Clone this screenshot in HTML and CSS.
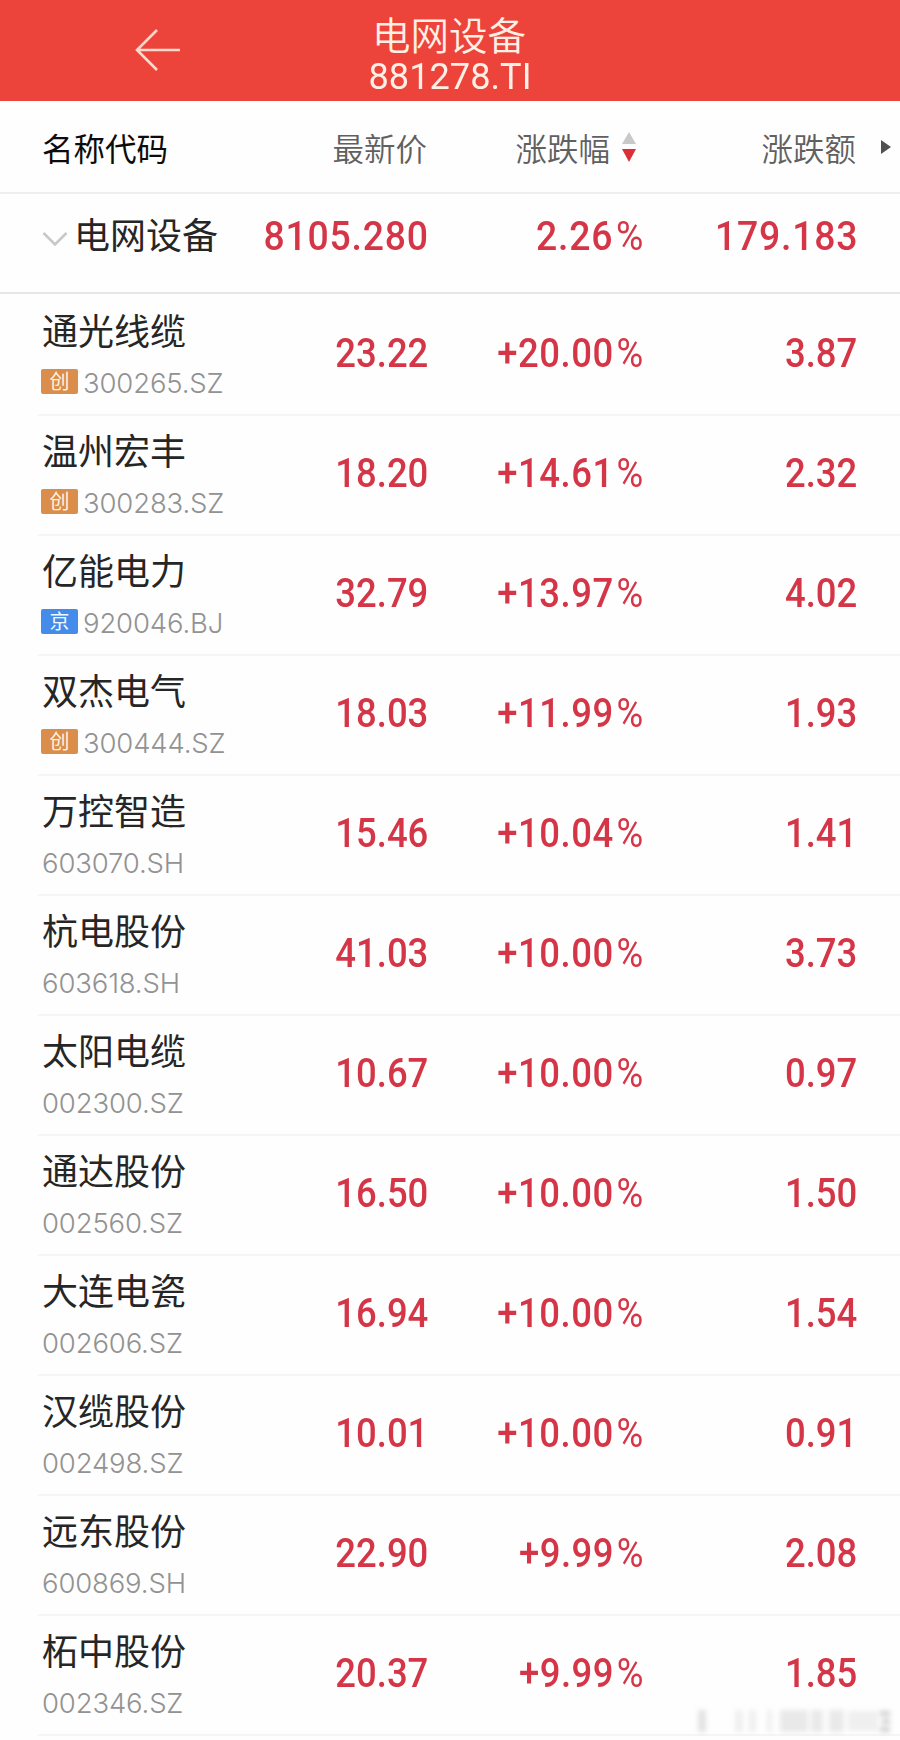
FILE: index.html
```html
<!DOCTYPE html>
<html lang="zh-CN">
<head>
<meta charset="utf-8">
<title>电网设备</title>
<link rel="stylesheet" href="styles.css">
</head>
<body>
<header class="topbar">
  <svg class="back" width="48" height="44" viewBox="0 0 48 44"><path d="M46 22H3M23 2 3 22l20 20" /></svg>
  <div class="title"><div class="title-name">电网设备</div><div class="title-code">881278.TI</div></div>
</header>
<div class="grid columns">
  <div class="col-name">名称代码</div>
  <div class="cell">最新价</div>
  <div class="cell sort">涨跌幅<svg width="16" height="32" viewBox="0 0 16 32"><path fill="#c9c9c9" d="M8 1 15 13H1z"/><path fill="#dc3038" d="M1 18h14L8 31z"/></svg></div>
  <div class="cell">涨跌额</div>
  <svg class="more" width="10" height="14" viewBox="0 0 10 14"><path fill="#505050" d="M0 0 10 7 0 14z"/></svg>
</div>
<div class="grid summary">
  <div class="sum-name"><svg width="26" height="16" viewBox="0 0 26 16"><path d="M1.5 2 13 13.500 24.500 2"/></svg>电网设备</div>
  <div class="num">8105.280</div><div class="num pct">2.26<i>%</i></div><div class="num">179.183</div>
</div>
<main class="list">
  <div class="grid row"><div class="stock"><div class="name">通光线缆</div><div class="code"><b class="tag">创</b>300265.SZ</div></div><div class="num">23.22</div><div class="num pct">+20.00<i>%</i></div><div class="num">3.87</div></div>
  <div class="grid row"><div class="stock"><div class="name">温州宏丰</div><div class="code"><b class="tag">创</b>300283.SZ</div></div><div class="num">18.20</div><div class="num pct">+14.61<i>%</i></div><div class="num">2.32</div></div>
  <div class="grid row"><div class="stock"><div class="name">亿能电力</div><div class="code"><b class="tag bj">京</b>920046.BJ</div></div><div class="num">32.79</div><div class="num pct">+13.97<i>%</i></div><div class="num">4.02</div></div>
  <div class="grid row"><div class="stock"><div class="name">双杰电气</div><div class="code"><b class="tag">创</b>300444.SZ</div></div><div class="num">18.03</div><div class="num pct">+11.99<i>%</i></div><div class="num">1.93</div></div>
  <div class="grid row"><div class="stock"><div class="name">万控智造</div><div class="code">603070.SH</div></div><div class="num">15.46</div><div class="num pct">+10.04<i>%</i></div><div class="num">1.41</div></div>
  <div class="grid row"><div class="stock"><div class="name">杭电股份</div><div class="code">603618.SH</div></div><div class="num">41.03</div><div class="num pct">+10.00<i>%</i></div><div class="num">3.73</div></div>
  <div class="grid row"><div class="stock"><div class="name">太阳电缆</div><div class="code">002300.SZ</div></div><div class="num">10.67</div><div class="num pct">+10.00<i>%</i></div><div class="num">0.97</div></div>
  <div class="grid row"><div class="stock"><div class="name">通达股份</div><div class="code">002560.SZ</div></div><div class="num">16.50</div><div class="num pct">+10.00<i>%</i></div><div class="num">1.50</div></div>
  <div class="grid row"><div class="stock"><div class="name">大连电瓷</div><div class="code">002606.SZ</div></div><div class="num">16.94</div><div class="num pct">+10.00<i>%</i></div><div class="num">1.54</div></div>
  <div class="grid row"><div class="stock"><div class="name">汉缆股份</div><div class="code">002498.SZ</div></div><div class="num">10.01</div><div class="num pct">+10.00<i>%</i></div><div class="num">0.91</div></div>
  <div class="grid row"><div class="stock"><div class="name">远东股份</div><div class="code">600869.SH</div></div><div class="num">22.90</div><div class="num pct">+9.99<i>%</i></div><div class="num">2.08</div></div>
  <div class="grid row"><div class="stock"><div class="name">柘中股份</div><div class="code">002346.SZ</div></div><div class="num">20.37</div><div class="num pct">+9.99<i>%</i></div><div class="num">1.85</div></div>
</main>
<svg class="smudge" width="204" height="32" viewBox="0 0 204 32"><g fill="#c4c4c4"><path opacity=".45" d="M6 5h8v22H6z"/><path opacity=".25" d="M43 5h8v22h-8zM57 5h7v22h-7zM75 5h5v22h-5z"/><path opacity=".36" d="M88 5h28v22H88zM119 5h12v22h-12zM137 5h15v22h-15z"/><path opacity=".25" d="M156 6h30v20h-30z"/><path opacity=".8" d="M188 6h10v5h-10zM190 14h8v5h-8zM188 22h10v5h-10z"/></g></svg>
</body>
</html>
```
FILE: styles.css
```css
* { box-sizing: border-box; }
body {
  margin: 0;
  width: 900px;
  height: 1740px;
  overflow: hidden;
  position: relative;
  background: #fefefe;
  font-family: "Noto Sans CJK SC", sans-serif;
}
.topbar {
  display: grid;
  grid-template-columns: 134px 1fr 134px;
  height: 101px;
  background: #ec443b;
  color: #ffefe4;
}
.back {
  margin-top: 28px;
  margin-left: 134px;
  fill: none;
  stroke: #ffd9cb;
  stroke-width: 2.6;
}
.title { text-align: center; padding-top: 13px; }
.title-name { margin-left: -2px; font-size: 38.5px; line-height: 40px; font-weight: 350; }
.title-code {
  padding-top: 5px;
  font: 400 37.5px/36px Roboto, sans-serif;
  transform: scaleX(.965);
}
.grid {
  display: grid;
  grid-template-columns: 240px 188px 215px 214px 1fr;
}
.columns {
  height: 93px;
  align-items: center;
  border-bottom: 2px solid #eee;
  font-size: 31.5px;
  color: #606060;
}
.col-name { padding-left: 42px; color: #0c0c0c; }
.cell { padding-right: 1px; text-align: right; font-weight: 350; }
.sort { display: flex; align-items: center; justify-content: flex-end; gap: 11px; padding-right: 6px; }
.more { margin-left: 24px; }
.summary {
  height: 100px;
  padding-bottom: 16px;
  align-items: center;
  border-bottom: 2px solid #e6e6e6;
}
.sum-name {
  display: flex;
  align-items: center;
  gap: 6px;
  margin-top: -4px;
  padding-left: 42px;
  font-size: 36px;
  color: #262626;
  white-space: nowrap;
}
.sum-name svg { margin-top: 12px; fill: none; stroke: #c8c8c8; stroke-width: 2.6; }
.num {
  justify-self: end;
  font: 500 40.5px/48px Roboto, sans-serif;
  color: #d53647;
  transform: scaleX(.9);
  transform-origin: right;
  white-space: nowrap;
}
.num i { margin-left: 3px; font-style: normal; font-weight: 400; }
.row .pct { letter-spacing: .6px; margin-right: -1px; }
.summary .num { margin: 2px -1px 0 0; font-size: 41.5px; letter-spacing: .9px; }
.row { position: relative; height: 120px; align-items: start; }
.row::after {
  content: "";
  position: absolute;
  left: 38px;
  right: 0;
  bottom: -2px;
  height: 2px;
  background: #f5f5f5;
}
.row .num { margin-top: 35px; }
.stock { padding: 13px 0 0 42px; }
.name { font-size: 36px; line-height: 44px; color: #262626; white-space: nowrap; }
.code {
  display: flex;
  align-items: center;
  margin-top: 14px;
  height: 36px;
  font: 300 27.5px/36px Inter, "Liberation Sans", sans-serif;
  letter-spacing: -.15px;
  color: #929292;
}
.tag {
  width: 37px;
  height: 25px;
  margin: -4px 5px 0 -1px;
  border-radius: 2px;
  background: #db8d4b;
  color: #fff3df;
  font: 400 20px/24px "Noto Sans CJK SC", sans-serif;
  letter-spacing: 0;
  text-align: center;
}
.bj { background: #458bea; color: #eefaff; }
.smudge { position: absolute; right: 4px; bottom: 3px; filter: blur(2.5px); }
```
